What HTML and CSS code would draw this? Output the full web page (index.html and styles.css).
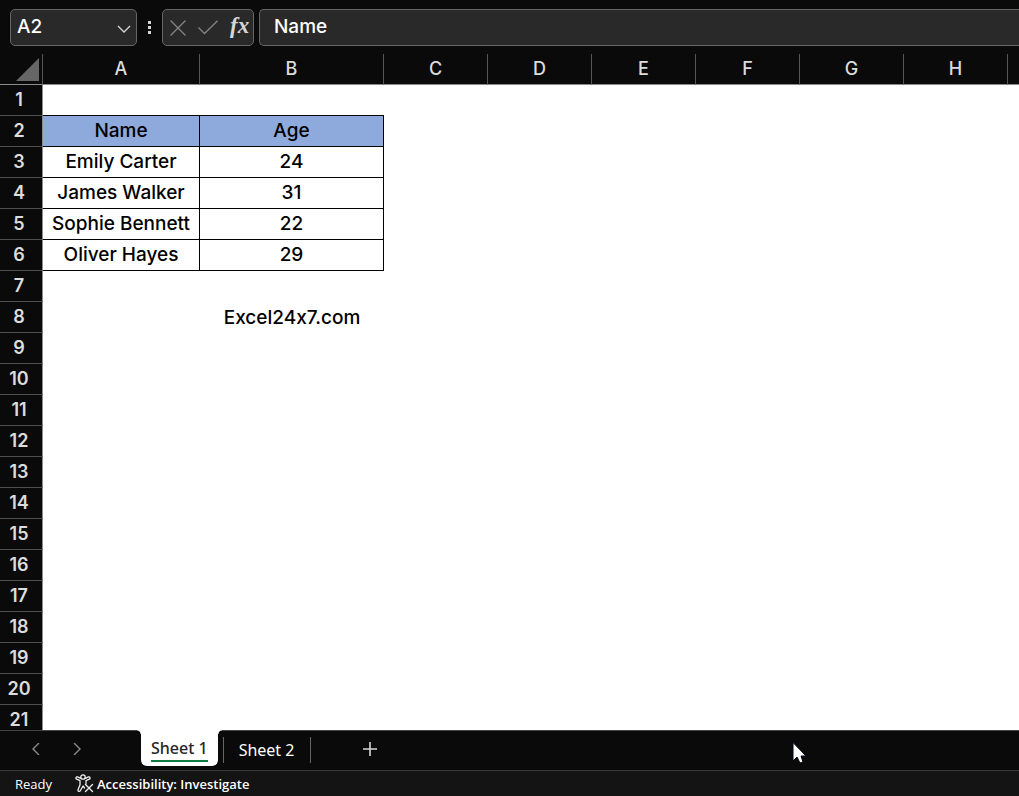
FILE: index.html
```html
<!DOCTYPE html>
<html lang="en">
<head>
<meta charset="utf-8">
<title>Spreadsheet</title>
<meta name="viewport" content="width=device-width, initial-scale=1">
<link rel="stylesheet" href="styles.css">
</head>
<body>
<div class="app">
  <header class="formula-bar">
    <div class="name-box">
      <input class="name-input" type="text" value="A2" aria-label="Name box">
      <button class="name-toggle" type="button" aria-label="Show names">
        <svg width="14" height="8" viewBox="0 0 14 8" fill="none" stroke="#d6d6d6" stroke-width="1.3"><path d="M1 1l6 6 6-6"/></svg>
      </button>
    </div>
    <svg class="grip" width="3" height="13" viewBox="0 0 3 13" fill="#d6d6d6"><path d="M0 0h3v3H0zM0 5h3v3H0zM0 10h3v3H0z"/></svg>
    <div class="entry-tools">
      <button class="tool" type="button" aria-label="Cancel">
        <svg width="16" height="16" viewBox="0 0 16 16" fill="none" stroke="#858585" stroke-width="1.3"><path d="M.5.5l15 15M15.5.5l-15 15"/></svg>
      </button>
      <button class="tool" type="button" aria-label="Enter">
        <svg width="20" height="16" viewBox="0 0 20 16" fill="none" stroke="#858585" stroke-width="1.3"><path d="M.5 7.500l6 6L19.500 .8"/></svg>
      </button>
      <button class="tool fx" type="button" aria-label="Insert function">fx</button>
    </div>
    <input class="formula-input" type="text" value="Name" aria-label="Formula bar">
  </header>

  <main class="grid-pane">
    <table class="grid">
      <colgroup><col class="col-head"><col class="col-a"><col class="col-b"><col><col><col><col><col><col><col></colgroup>
      <thead>
        <tr>
          <th class="corner"><svg width="23" height="23" viewBox="0 0 23 23"><path d="M23 0v23H0z" fill="#666"/></svg></th>
          <th>A</th><th>B</th><th>C</th><th>D</th><th>E</th><th>F</th><th>G</th><th>H</th><th></th>
        </tr>
      </thead>
      <tbody>
        <tr class="above-data"><th>1</th><td></td><td></td><td colspan="7"></td></tr>
        <tr class="data title"><th>2</th><td>Name</td><td>Age</td><td colspan="7"></td></tr>
        <tr class="data"><th>3</th><td>Emily Carter</td><td>24</td><td colspan="7"></td></tr>
        <tr class="data"><th>4</th><td>James Walker</td><td>31</td><td colspan="7"></td></tr>
        <tr class="data"><th>5</th><td>Sophie Bennett</td><td>22</td><td colspan="7"></td></tr>
        <tr class="data"><th>6</th><td>Oliver Hayes</td><td>29</td><td colspan="7"></td></tr>
        <tr><th>7</th><td colspan="9"></td></tr>
        <tr><th>8</th><td></td><td>Excel24x7.com</td><td colspan="7"></td></tr>
        <tr><th>9</th><td colspan="9"></td></tr>
        <tr><th>10</th><td colspan="9"></td></tr>
        <tr><th>11</th><td colspan="9"></td></tr>
        <tr><th>12</th><td colspan="9"></td></tr>
        <tr><th>13</th><td colspan="9"></td></tr>
        <tr><th>14</th><td colspan="9"></td></tr>
        <tr><th>15</th><td colspan="9"></td></tr>
        <tr><th>16</th><td colspan="9"></td></tr>
        <tr><th>17</th><td colspan="9"></td></tr>
        <tr><th>18</th><td colspan="9"></td></tr>
        <tr><th>19</th><td colspan="9"></td></tr>
        <tr><th>20</th><td colspan="9"></td></tr>
        <tr><th>21</th><td colspan="9"></td></tr>
      </tbody>
    </table>
  </main>

  <nav class="sheet-bar" aria-label="Sheets">
    <div class="sheet-nav">
      <button class="icon-button" type="button" aria-label="Previous sheet"><svg width="8" height="12" viewBox="0 0 8 12" fill="none" stroke="#8c8c8c" stroke-width="1.4"><path d="M7 0L1 6l6 6"/></svg></button>
      <button class="icon-button" type="button" aria-label="Next sheet"><svg width="8" height="12" viewBox="0 0 8 12" fill="none" stroke="#8c8c8c" stroke-width="1.4"><path d="M1 0l6 6-6 6"/></svg></button>
    </div>
    <button class="tab active" type="button"><span class="tab-label">Sheet 1</span></button>
    <button class="tab" type="button">Sheet 2</button>
    <button class="icon-button add" type="button" aria-label="New sheet"><svg width="14" height="14" viewBox="0 0 14 14" fill="none" stroke="#d6d6d6" stroke-width="1.6"><path d="M7 0v14M0 7h14"/></svg></button>
  </nav>

  <footer class="status-bar">
    <span>Ready</span>
    <button class="accessibility" type="button">
      <svg width="19" height="19" viewBox="0 0 19 19" fill="none" stroke="#eee" stroke-width="1.3" stroke-linecap="round" stroke-linejoin="round"><circle cx="8" cy="3" r="2.2"/><path d="M5.800 4.400L2.500 2.900C1 2.500.3 4.500 1.700 5.200L5 6.700v4l-2 5c-.4 1.600 1.600 2.300 2.300 1L8 12l1.500 2M10.200 4.400l3.300-1.500c1.500-.4 2.200 1.600.8 2.300L11 6.700v3M10.500 10.500l7 7M17.500 10.500l-7 7"/></svg>
      <span>Accessibility: Investigate</span>
    </button>
  </footer>

  <svg class="pointer" width="16" height="24" viewBox="0 0 16 24"><path d="M1 .5v18.500l4-4 3 6 3-1-2-6h5z" fill="#fff" stroke="#05051a"/></svg>
</div>
</body>
</html>
```
FILE: styles.css
```css
* { box-sizing: border-box; }

body {
  margin: 0;
  background: #0a0a0a;
  color: #fff;
  font-family: Inter, "Open Sans", sans-serif;
  font-variant-ligatures: no-contextual;
}

button, input {
  margin: 0;
  padding: 0;
  border: 0;
  background: none;
  color: inherit;
  font: inherit;
}

svg { display: block; }

.app {
  display: flex;
  flex-direction: column;
  height: 100vh;
  overflow: hidden;
}

/* Formula bar */
.formula-bar {
  display: flex;
  align-items: center;
  padding: 9px 0 8px 10px;
  font-size: 19px;
  font-weight: 500;
}

.name-box, .entry-tools, .formula-input {
  height: 37px;
  border: 1px solid #666;
  border-radius: 5px;
  background: #292929;
}

.name-box {
  display: flex;
  align-items: center;
  width: 127px;
  padding: 0 5px 0 6px;
}

.name-input { flex: 1; min-width: 0; padding-bottom: 2px; }
.name-toggle { padding-top: 2px; }
.grip { margin: 0 11px; }

.entry-tools {
  display: flex;
  align-items: center;
  gap: 12px;
  width: 92px;
  padding-left: 7px;
}

.fx {
  color: #d6d6d6;
  font: italic 700 23px/24px "Liberation Serif", serif;
  padding-bottom: 3px;
}

.formula-input {
  flex: 1;
  min-width: 0;
  margin-left: 5px;
  padding: 0 14px 3px;
  border-right: 0;
  border-radius: 5px 0 0 5px;
}

/* Cells */
.grid-pane {
  flex: 1;
  min-height: 0;
  overflow: hidden;
  background: #fff;
}

.grid {
  width: 1112px;
  table-layout: fixed;
  border-collapse: separate;
  border-spacing: 0;
  color: #000;
  font-size: 19px;
  font-weight: 500;
  line-height: 24px;
}

.grid col { width: 104px; }
.grid .col-head { width: 43px; }
.grid .col-a { width: 157px; }
.grid .col-b { width: 184px; }

.grid th, .grid td {
  height: 31px;
  padding: 0;
  text-align: center;
  white-space: nowrap;
}

.grid th {
  background: #0a0a0a;
  color: #dcdcdc;
  font-size: 18px;
  font-weight: 500;
}

.grid thead th {
  border-right: 1px solid #555;
  border-bottom: 1px solid #8c8c8c;
}

.grid .corner { padding: 0 3px 3px 0; vertical-align: bottom; }
.corner svg { margin-left: auto; }

.grid tbody th {
  padding-right: 4px;
  border-right: 1px solid #8c8c8c;
  border-bottom: 1px solid #4d4d4d;
  font-weight: 600;
}

.data td:nth-child(2), .data td:nth-child(3) {
  border-right: 1px solid #000;
  border-bottom: 1px solid #000;
}

.above-data td:nth-child(2), .above-data td:nth-child(3) { border-bottom: 1px solid #000; }
.title td:nth-child(2), .title td:nth-child(3) { background: #8ea9db; }

/* Sheet tabs */
.sheet-bar {
  display: flex;
  align-items: flex-start;
  height: 40px;
  border-top: 1px solid #444;
  font: 16px/24px "Noto Sans", sans-serif;
}

.sheet-nav {
  display: flex;
  gap: 17px;
  width: 141px;
  padding-left: 24px;
}

.icon-button {
  display: grid;
  place-items: center;
  width: 24px;
  height: 36px;
}

.tab {
  height: 26px;
  margin-top: 6px;
  padding: 0 16px 0 15px;
  border-right: 1px solid #666;
}

.tab.active {
  position: relative;
  height: 36px;
  margin: -1px 5px 0 0;
  padding: 0 10px;
  border: 0;
  border-radius: 0 0 6px 6px;
  background: #fff;
  color: #262626;
  font-weight: 500;
}

/* Flared corners where the active tab meets the grid */
.tab.active::before, .tab.active::after {
  content: "";
  position: absolute;
  top: 0;
  width: 4px;
  height: 4px;
}

.tab.active::before { right: 100%; background: radial-gradient(circle at 0 100%, #0a0a0a 3px, #fff 4px); }
.tab.active::after { left: 100%; background: radial-gradient(circle at 100% 100%, #0a0a0a 3px, #fff 4px); }

.tab-label {
  display: block;
  padding-top: 2px;
  border-bottom: 2px solid #107c41;
}

.tab.active + .tab { border-left: 1px solid #666; }
.add { margin-left: 47px; }

/* Status bar */
.status-bar {
  display: flex;
  align-items: center;
  gap: 23px;
  height: 26px;
  padding: 0 15px;
  border-top: 1px solid #3a3a3a;
  background: #141414;
  font: 13px/18px "Open Sans", sans-serif;
}

.accessibility {
  display: flex;
  align-items: center;
  gap: 3px;
  font-weight: 600;
}

.pointer {
  position: absolute;
  left: 792px;
  top: 742px;
}
```
